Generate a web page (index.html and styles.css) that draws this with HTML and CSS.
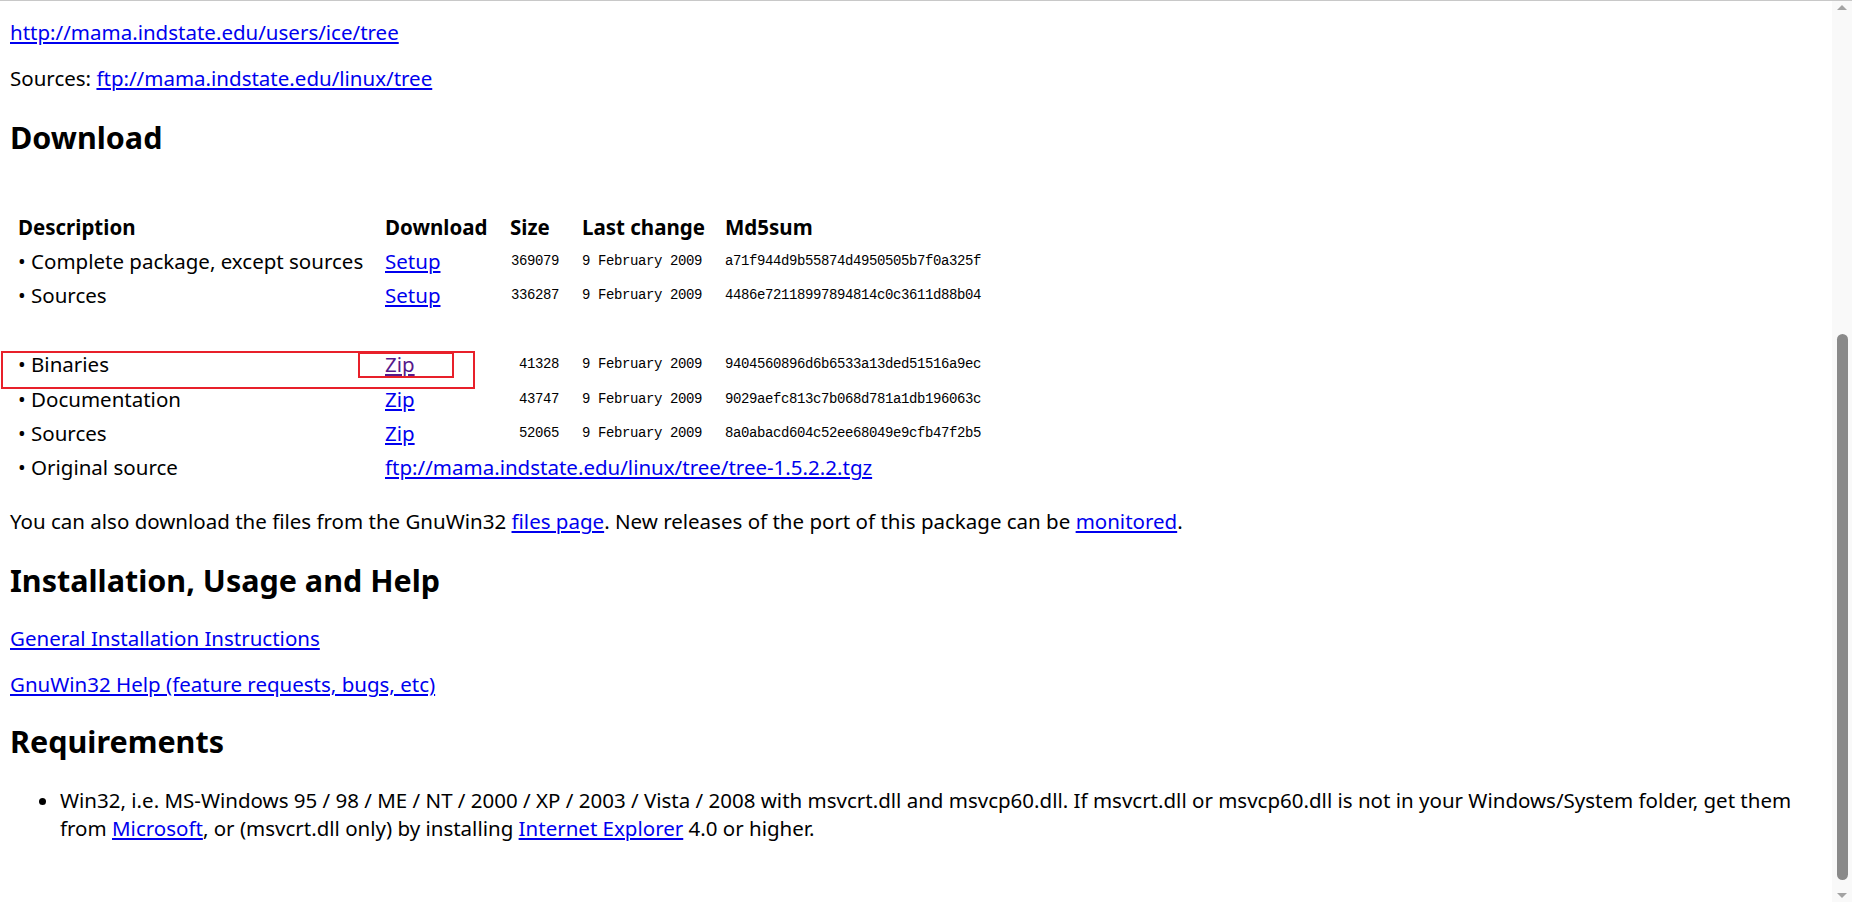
FILE: index.html
```html
<!DOCTYPE html>
<html>
<head>
<meta charset="utf-8">
<title>Tree for Windows</title>
<link rel="stylesheet" href="styles.css">
</head>
<body>
<div class="page">
  <main class="content">
    <p class="first"><a href="#">http://mama.indstate.edu/users/ice/tree</a></p>
    <p>Sources: <a href="#">ftp://mama.indstate.edu/linux/tree</a></p>
    <h2>Download</h2>
    <div class="table-wrap">
      <table class="dl">
        <colgroup>
          <col class="c-desc"><col class="c-dl"><col class="c-size"><col class="c-date"><col class="c-md5">
        </colgroup>
        <tr><th class="desc">Description</th><th>Download</th><th>Size</th><th>Last change</th><th>Md5sum</th></tr>
        <tr><td class="desc">• Complete package, except sources</td><td><a href="#">Setup</a></td><td class="size mono">369079</td><td class="mono">9 February 2009</td><td class="mono">a71f944d9b55874d4950505b7f0a325f</td></tr>
        <tr><td class="desc">• Sources</td><td><a href="#">Setup</a></td><td class="size mono">336287</td><td class="mono">9 February 2009</td><td class="mono">4486e72118997894814c0c3611d88b04</td></tr>
        <tr><td class="desc">&nbsp;</td><td></td><td></td><td></td><td></td></tr>
        <tr><td class="desc">• Binaries</td><td><a href="#" class="visited">Zip</a></td><td class="size mono">41328</td><td class="mono">9 February 2009</td><td class="mono">9404560896d6b6533a13ded51516a9ec</td></tr>
        <tr><td class="desc">• Documentation</td><td><a href="#">Zip</a></td><td class="size mono">43747</td><td class="mono">9 February 2009</td><td class="mono">9029aefc813c7b068d781a1db196063c</td></tr>
        <tr><td class="desc">• Sources</td><td><a href="#">Zip</a></td><td class="size mono">52065</td><td class="mono">9 February 2009</td><td class="mono">8a0abacd604c52ee68049e9cfb47f2b5</td></tr>
        <tr><td class="desc">• Original source</td><td colspan="4" class="nowrap"><a href="#">ftp://mama.indstate.edu/linux/tree/tree-1.5.2.2.tgz</a></td></tr>
      </table>
      <div class="mark mark-row"></div>
      <div class="mark mark-link"></div>
    </div>
    <p>You can also download the files from the GnuWin32 <a href="#">files page</a>. New releases of the port of this package can be <a href="#">monitored</a>.</p>
    <h2>Installation, Usage and Help</h2>
    <p><a href="#">General Installation Instructions</a></p>
    <p><a href="#">GnuWin32 Help (feature requests, bugs, etc)</a></p>
    <h2 class="req-title">Requirements</h2>
    <ul class="req">
      <li>Win32, i.e. MS-Windows 95 / 98 / ME / NT / 2000 / XP / 2003 / Vista / 2008 with msvcrt.dll and msvcp60.dll. If msvcrt.dll or msvcp60.dll is not in your Windows/System folder, get them from <a href="#">Microsoft</a>, or (msvcrt.dll only) by installing <a href="#">Internet Explorer</a> 4.0 or higher.</li>
    </ul>
  </main>
  <div class="scrollbar">
    <div class="arrow up"></div>
    <div class="track"><div class="thumb"></div></div>
    <div class="arrow down"></div>
  </div>
</div>
</body>
</html>
```
FILE: styles.css
```css
html, body {
  margin: 0;
  padding: 0;
  background: #fff;
}
body {
  font-family: "Noto Sans", "Open Sans", sans-serif;
  font-size: 20.5px;
  line-height: 27px;
  color: #000;
}
.page {
  display: flex;
  height: 901px;
  border-top: 1px solid #c8c8c8;
  overflow: hidden;
}
.content {
  flex: 1;
  min-width: 0;
  padding: 0 10px;
}
a {
  color: #0000ee;
  text-decoration: underline;
}
a.visited {
  color: #551a8b;
}
p {
  margin: 19px 0;
}
p.first {
  margin-top: 18px;
}
h2 {
  font-size: 30.5px;
  line-height: 38px;
  font-weight: bold;
  margin: 26px 0;
}
h2.req-title {
  margin-top: 24px;
}
.table-wrap {
  position: relative;
  margin: 54px 0 23px;
}
table.dl {
  border-collapse: collapse;
  border-spacing: 0;
  table-layout: fixed;
  width: 1015px;
}
.c-desc { width: 375px; }
.c-dl { width: 125px; }
.c-size { width: 72px; }
.c-date { width: 143px; }
.c-md5 { width: 300px; }
th, td {
  padding: 0;
  height: 34.4px;
  text-align: left;
  vertical-align: middle;
  white-space: nowrap;
}
th {
  font-weight: bold;
}
th.desc, td.desc {
  padding-left: 8px;
}
td.size {
  text-align: right;
  padding-right: 23px;
}
.mono {
  font-family: "Liberation Mono", "DejaVu Sans Mono", monospace;
  font-size: 14px;
  letter-spacing: -0.4px;
}
.mark {
  position: absolute;
  border: 2px solid #e8202a;
  box-sizing: border-box;
}
.mark-row {
  left: -9px;
  top: 141px;
  width: 474px;
  height: 38px;
}
.mark-link {
  left: 348px;
  top: 142px;
  width: 96px;
  height: 26px;
}
ul.req {
  margin: 20px 0 19px;
  padding-left: 50px;
  line-height: 28px;
}
.scrollbar {
  width: 20px;
  flex: none;
  background: #f9f9f9;
  display: flex;
  flex-direction: column;
  align-items: center;
}
.arrow {
  width: 0;
  height: 0;
  border-left: 5px solid transparent;
  border-right: 5px solid transparent;
  flex: none;
}
.arrow.up {
  margin-top: 4px;
  border-bottom: 5px solid #a3a3a3;
}
.arrow.down {
  margin-bottom: 4px;
  border-top: 5px solid #a3a3a3;
}
.track {
  flex: 1;
  width: 100%;
  display: flex;
  flex-direction: column;
  align-items: center;
  justify-content: flex-end;
  padding-bottom: 13px;
}
.thumb {
  width: 11px;
  height: 546px;
  background: #8a8a8a;
  border-radius: 6px;
}
```
